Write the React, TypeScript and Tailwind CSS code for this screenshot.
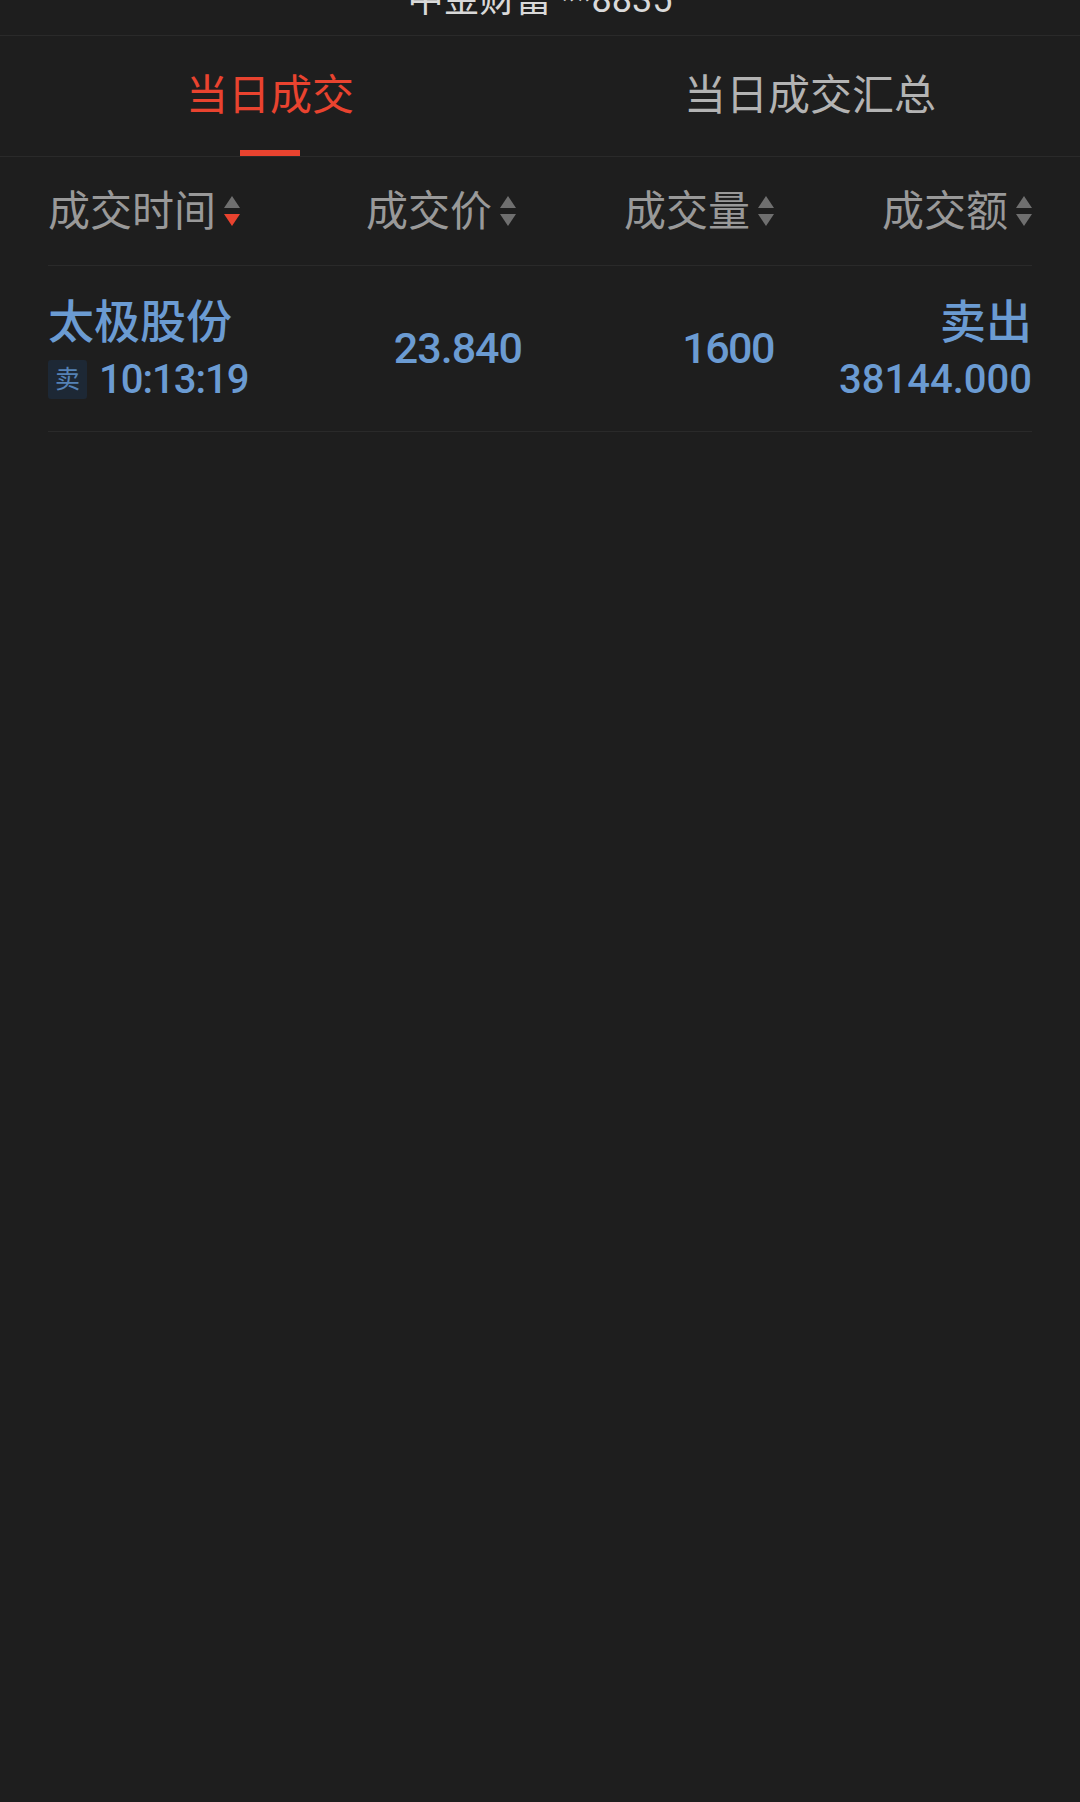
import React from 'react';

function SortIcon({ active = false }: { active?: boolean }) {
  return (
    <svg width="16" height="30" viewBox="0 0 16 30" className="ml-[8px] shrink-0">
      <path d="M8 0 L16 12 L0 12 Z" fill="#6f6f6f" />
      <path d="M0 18 L16 18 L8 30 Z" fill={active ? '#e9432f' : '#6f6f6f'} />
    </svg>
  );
}

const cols = 'grid grid-cols-[210px_264px_252px_258px] items-center';

export default function App() {
  return (
    <div className="min-h-[1802px] w-full bg-[#1e1e1e] font-[Roboto,'Noto_Sans_CJK_SC',sans-serif]">
      {/* title bar, cut at the top */}
      <div className="h-[36px] overflow-hidden border-b border-[#2a2a2a] flex justify-center items-end">
        <div className="text-[36px] leading-[36px] text-[#d9d9d9] mb-[17px] whitespace-nowrap">中金财富 **8835</div>
      </div>

      {/* tabs */}
      <div className="h-[121px] flex border-b border-[#2a2a2a]">
        <div className="flex-1 flex flex-col items-center">
          <div className="flex-1 pt-[5px] flex items-center justify-center text-[42px] text-[#e9432f]">当日成交</div>
          <div className="h-[6px] w-[60px] bg-[#e9432f]" />
        </div>
        <div className="flex-1 flex flex-col items-center">
          <div className="flex-1 pt-[5px] flex items-center justify-center text-[42px] text-[#b3b3b3]">当日成交汇总</div>
          <div className="h-[6px]" />
        </div>
      </div>

      {/* column header */}
      <div className={`${cols} mx-[48px] h-[109px] border-b border-[#2a2a2a] text-[42px] text-[#999999]`}>
        <div className="flex items-center">
          成交时间
          <SortIcon active />
        </div>
        <div className="flex items-center justify-end pr-[6px]">
          成交价
          <SortIcon />
        </div>
        <div className="flex items-center justify-end">
          成交量
          <SortIcon />
        </div>
        <div className="flex items-center justify-end">
          成交额
          <SortIcon />
        </div>
      </div>

      {/* trade row */}
      <div className={`${cols} mx-[48px] h-[166px] border-b border-[#2a2a2a] text-[#6b9bd2] font-medium`}>
        <div className="flex flex-col">
          <div className="h-[52px] leading-[52px] text-[46px] whitespace-nowrap">太极股份</div>
          <div className="mt-[10px] h-[44px] flex items-center">
            <span className="w-[39px] h-[39px] rounded-[3px] bg-[#1d2835] text-[#5582b6] text-[25px] font-normal flex items-center justify-center">卖</span>
            <span className="ml-[12px] text-[40px] leading-[44px] tracking-[-1px]">10:13:19</span>
          </div>
        </div>
        <div className="text-right text-[43px] tracking-[-1px]">23.840</div>
        <div className="text-right text-[43px] tracking-[-1.5px]">1600</div>
        <div className="flex flex-col items-end">
          <div className="h-[52px] leading-[52px] text-[46px]">卖出</div>
          <div className="mt-[10px] h-[44px] leading-[44px] text-[40px]">38144.000</div>
        </div>
      </div>
    </div>
  );
}
